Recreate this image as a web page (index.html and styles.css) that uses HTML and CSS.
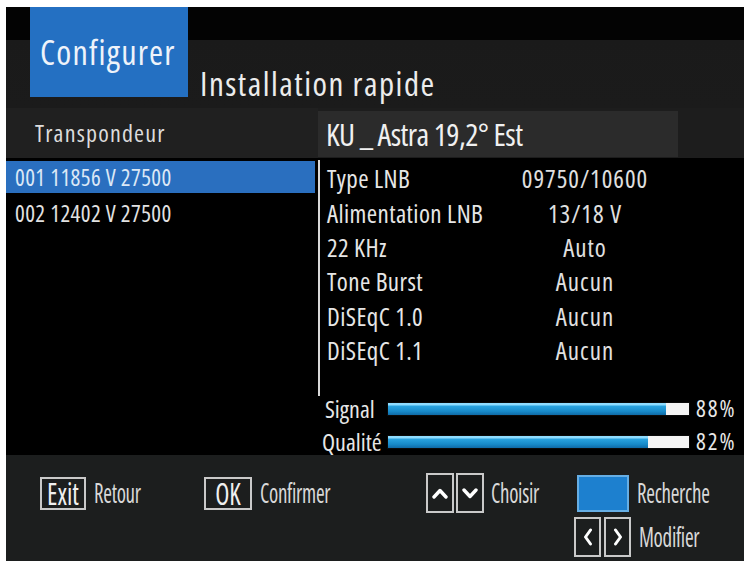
FILE: index.html
```html
<!DOCTYPE html>
<html lang="fr">
<head>
<meta charset="utf-8">
<title>Installation rapide</title>
<link rel="stylesheet" href="styles.css">
</head>
<body>
<div class="screen">
  <header class="top">
    <div class="menu-tab">Configurer</div>
    <h1 class="title">Installation rapide</h1>
  </header>

  <div class="subhead">
    <div class="col-head">Transpondeur</div>
    <div class="sat">KU _ Astra 19,2° Est</div>
  </div>

  <main class="content">
    <ul class="tp-list">
      <li class="tp selected">001 11856 V 27500</li>
      <li class="tp">002 12402 V 27500</li>
    </ul>

    <section class="info">
      <div class="params">
        <span class="p-label">Type LNB</span><span class="p-value">09750/10600</span>
        <span class="p-label">Alimentation LNB</span><span class="p-value">13/18 V</span>
        <span class="p-label">22 KHz</span><span class="p-value">Auto</span>
        <span class="p-label">Tone Burst</span><span class="p-value">Aucun</span>
        <span class="p-label">DiSEqC 1.0</span><span class="p-value">Aucun</span>
        <span class="p-label">DiSEqC 1.1</span><span class="p-value">Aucun</span>
      </div>
      <div class="meters">
        <div class="meter">
          <span class="m-label">Signal</span>
          <div class="bar"><div class="fill" style="width:92.4%"></div></div>
          <span class="pct">88%</span>
        </div>
        <div class="meter">
          <span class="m-label m-label-q">Qualité</span>
          <div class="bar"><div class="fill" style="width:86.5%"></div></div>
          <span class="pct">82%</span>
        </div>
      </div>
    </section>
  </main>

  <footer class="help">
    <div class="help-row">
      <div class="hint">
        <span class="key key-exit"><span class="key-text">Exit</span></span>
        <span class="hint-label">Retour</span>
      </div>
      <div class="hint">
        <span class="key key-ok"><span class="key-text">OK</span></span>
        <span class="hint-label">Confirmer</span>
      </div>
      <div class="hint">
        <span class="key key-arrow"><svg width="16" height="11" viewBox="0 0 16 11"><polyline points="2,9 8,2.5 14,9" fill="none" stroke="#fff" stroke-width="3.4" stroke-linecap="round" stroke-linejoin="round"/></svg></span>
        <span class="key key-arrow"><svg width="16" height="11" viewBox="0 0 16 11"><polyline points="2,2 8,8.5 14,2" fill="none" stroke="#fff" stroke-width="3.4" stroke-linecap="round" stroke-linejoin="round"/></svg></span>
        <span class="hint-label">Choisir</span>
      </div>
      <div class="hint">
        <span class="key key-blue"></span>
        <span class="hint-label">Recherche</span>
      </div>
    </div>
    <div class="help-row help-row-2">
      <div class="hint">
        <span class="key key-lr"><svg width="10" height="18" viewBox="0 0 10 18"><polyline points="7.5,2 2.5,9 7.5,16" fill="none" stroke="#fff" stroke-width="3" stroke-linecap="round" stroke-linejoin="round"/></svg></span>
        <span class="key key-lr"><svg width="10" height="18" viewBox="0 0 10 18"><polyline points="2.5,2 7.5,9 2.5,16" fill="none" stroke="#fff" stroke-width="3" stroke-linecap="round" stroke-linejoin="round"/></svg></span>
        <span class="hint-label">Modifier</span>
      </div>
    </div>
  </footer>
</div>
</body>
</html>
```
FILE: styles.css
```css
html, body {
  margin: 0;
  padding: 0;
  background: #ffffff;
}

body {
  font-family: "Open Sans", "Roboto", sans-serif;
  font-stretch: 75%;
  color: #e4e4e4;
}

.screen {
  width: 738px;
  height: 554px;
  margin: 7px 0 0 6px;
  background: #000;
  display: flex;
  flex-direction: column;
  overflow: hidden;
}

/* ---------- header ---------- */
.top {
  height: 101px;
  flex: none;
  display: flex;
  align-items: flex-start;
  background: linear-gradient(to bottom, #030303 0, #030303 33px, #1a1a1a 33px, #1b1b1b 100%);
}

.menu-tab {
  margin-left: 24px;
  width: 158px;
  height: 90px;
  box-sizing: border-box;
  padding: 25px 0 0 10px;
  background: #2470c2;
  font-size: 34px;
  line-height: 40px;
  letter-spacing: 1.2px;
  color: #eef3fa;
}

.title {
  margin: 57px 0 0 12px;
  font-size: 33px;
  line-height: 40px;
  font-weight: 400;
  letter-spacing: 1.5px;
  color: #ececec;
}

/* ---------- sub header ---------- */
.subhead {
  height: 50px;
  flex: none;
  display: flex;
  background: #1d1d1d;
}

.col-head {
  width: 312px;
  box-sizing: border-box;
  padding-left: 29px;
  font-size: 24px;
  line-height: 50px;
  letter-spacing: 1.2px;
  color: #dcdcdc;
  background: #202020;
}

.sat {
  width: 360px;
  height: 46px;
  margin-top: 3px;
  box-sizing: border-box;
  padding-left: 8px;
  background: #2b2b2b;
  font-size: 31px;
  line-height: 46px;
  letter-spacing: -0.6px;
  color: #f0f0f0;
}

/* ---------- content ---------- */
.content {
  height: 297px;
  flex: none;
  display: grid;
  grid-template-columns: 312px 1fr;
  background: #000;
}

.tp-list {
  list-style: none;
  margin: 0;
  padding: 3px 0 0 0;
  display: flex;
  flex-direction: column;
  gap: 4px;
}

.tp {
  width: 309px;
  height: 32px;
  box-sizing: border-box;
  padding-left: 9px;
  font-size: 23px;
  line-height: 32px;
  letter-spacing: 0.4px;
  color: #e2e2e2;
}

.tp.selected {
  background: #2a6fbf;
  color: #dbe8f6;
}

.info {
  display: flex;
  flex-direction: column;
}

.params {
  height: 236px;
  margin-top: 2px;
  box-sizing: border-box;
  padding: 1px 0 0 7px;
  border-left: 2px solid #d9d9d9;
  display: grid;
  grid-template-columns: 193px 130px;
  grid-auto-rows: 34.4px;
  align-items: center;
  font-size: 25px;
  line-height: 34px;
  letter-spacing: 0.4px;
}

.p-label {
  color: #e6e6e6;
}

.p-value {
  text-align: center;
  letter-spacing: 1px;
  color: #e0e0e0;
}

.meters {
  display: flex;
  flex-direction: column;
  gap: 8px;
}

.meter {
  height: 25px;
  display: flex;
  align-items: center;
}

.m-label {
  width: 69px;
  box-sizing: border-box;
  padding-left: 7px;
  font-size: 24px;
  line-height: 25px;
  color: #e6e6e6;
}

.m-label-q {
  padding-left: 4px;
}

.bar {
  width: 303px;
  height: 14px;
  box-sizing: border-box;
  border: 1px solid #0a0a0a;
  background: #f4f4f4;
  display: flex;
}

.fill {
  height: 100%;
  background: linear-gradient(to bottom, #8fdcff 0, #8fdcff 2px, #2aa4e0 3px, #1789c8 70%, #0f6aa6 100%);
}

.pct {
  margin-left: 6px;
  font-size: 23px;
  line-height: 25px;
  letter-spacing: 2px;
  color: #e8e8e8;
}

/* ---------- footer ---------- */
.help {
  flex: 1;
  background: #1c1e1e;
  display: flex;
  flex-direction: column;
  padding-top: 18px;
  gap: 4px;
}

.help-row {
  height: 40px;
  display: grid;
  grid-template-columns: 164px 222px 151px 1fr;
  padding-left: 34px;
  align-items: center;
}

.help-row-2 {
  grid-template-columns: 1fr;
  padding-left: 568px;
}

.hint {
  display: flex;
  align-items: center;
}

.key {
  box-sizing: border-box;
  border: 2px solid #c9c9c9;
  display: flex;
  align-items: center;
  justify-content: center;
  color: #f0f0f0;
}

.key-text {
  display: inline-block;
  font-size: 26px;
  line-height: 26px;
  transform: scaleY(1.2);
}

.key-exit {
  width: 46px;
  height: 33px;
}

.key-ok {
  width: 48px;
  height: 33px;
}

.key-arrow {
  width: 28px;
  height: 40px;
  margin-right: 2px;
}

.key-blue {
  width: 52px;
  height: 37px;
  border-color: #66aee4;
  background: #1d80cf;
}

.key-lr {
  width: 27px;
  height: 40px;
  margin-right: 3px;
}

.hint-label {
  display: inline-block;
  margin-left: 8px;
  font-size: 21px;
  line-height: 26px;
  letter-spacing: -0.3px;
  color: #d8d8d8;
  transform: scaleY(1.3);
}

.key-arrow + .hint-label,
.key-lr + .hint-label {
  margin-left: 5px;
}
```
